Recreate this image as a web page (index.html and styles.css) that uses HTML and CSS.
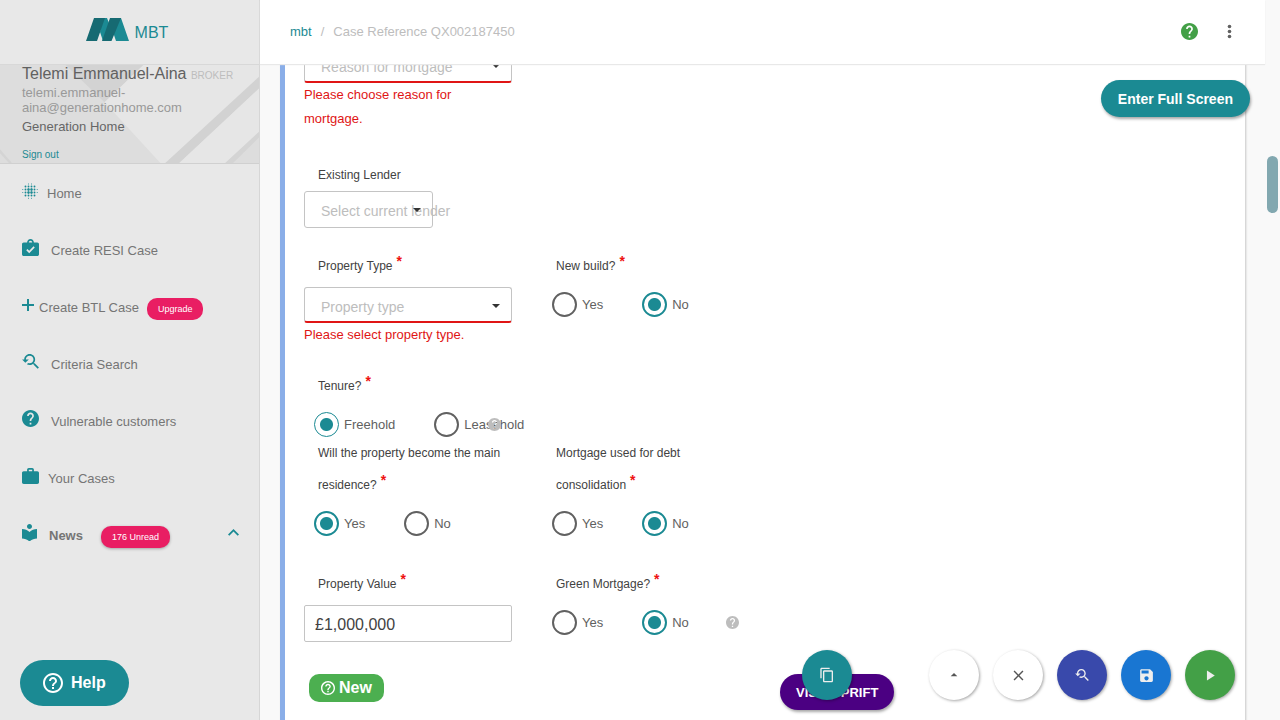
FILE: index.html
```html
<!DOCTYPE html>
<html lang="en">
<head>
<meta charset="utf-8">
<title>Case Reference QX002187450</title>
<link rel="stylesheet" href="styles.css">
</head>
<body>
<svg class="sprite" aria-hidden="true">
  <symbol id="help-solid" viewBox="2 2 20 20"><path d="M12 2C6.480 2 2 6.480 2 12s4.480 10 10 10 10-4.480 10-10S17.520 2 12 2zm1 17h-2v-2h2v2zm2.070-7.750l-.9.920C13.450 12.900 13 13.500 13 15h-2v-.5c0-1.100.450-2.100 1.170-2.830l1.240-1.260c.370-.360.590-.860.590-1.410 0-1.100-.9-2-2-2s-2 .9-2 2H8c0-2.210 1.790-4 4-4s4 1.790 4 4c0 .880-.360 1.680-.930 2.250z"/></symbol>
  <symbol id="help-line" viewBox="2 2 20 20"><path d="M11 18h2v-2h-2v2zm1-16C6.480 2 2 6.480 2 12s4.480 10 10 10 10-4.480 10-10S17.520 2 12 2zm0 18c-4.410 0-8-3.590-8-8s3.590-8 8-8 8 3.590 8 8-3.590 8-8 8zm0-14c-2.210 0-4 1.790-4 4h2c0-1.100.9-2 2-2s2 .9 2 2c0 2-3 1.750-3 5h2c0-2.250 3-2.500 3-5 0-2.210-1.790-4-4-4z"/></symbol>
  <symbol id="search-back" viewBox="2 3 20 19"><path d="M17.010 14h-.8l-.270-.270c.980-1.140 1.570-2.610 1.570-4.230 0-3.590-2.910-6.500-6.500-6.500s-6.500 3-6.500 6.500H2l3.840 4 4.160-4H6.510C6.510 7 8.530 5 11.010 5s4.500 2.010 4.500 4.500c0 2.480-2.020 4.500-4.500 4.500-.650 0-1.260-.140-1.820-.380L7.710 15.100c.970.570 2.090.9 3.300.9 1.610 0 3.080-.590 4.220-1.570l.270.270v.790l5.010 4.990L22 19l-4.990-5z"/></symbol>
</svg>

<div class="shell">
  <aside class="sidebar">
    <div class="brand">
      <svg class="brand-mark" viewBox="0 0 43 23" aria-hidden="true">
        <path fill="#1b8a93" d="M16 0h5l2 5-2 14-4 4-3-9zM31 0h4l8 23H30l-3-9z"/>
        <path fill="#166a72" d="M8 0h11L11 23H0zM24 0h11l-9.500 23H16z"/>
      </svg>
      <span>MBT</span>
    </div>
    <section class="user">
      <svg class="user-art" viewBox="0 0 260 100" preserveAspectRatio="none" aria-hidden="true">
        <path fill="#dddddd" d="M0 0h260v100H0z"/>
        <path fill="#d3d3d3" d="M66 0h78l-39 38z"/>
        <path fill="#e6e6e6" d="M144 0h116v14l-94 86h-5l-56-62z"/>
        <path fill="#d2d2d2" d="M260 12v12l-80 76h-14z"/>
        <path fill="#e6e6e6" d="M260 24v46l-33 30h-47z"/>
        <path fill="#d4d4d4" d="M260 68v6l-26 26h-8zM0 86l12 14H9L0 90z"/>
      </svg>
      <div class="user-name">Telemi Emmanuel-Aina <small>BROKER</small></div>
      <div class="user-mail">telemi.emmanuel-<br>aina@generationhome.com</div>
      <div class="user-firm">Generation Home</div>
      <a class="sign-out" href="#">Sign out</a>
    </section>
    <nav class="nav">
      <a class="nav-item gap-m" href="#">
        <svg width="16" height="16" viewBox="0 0 16 16" aria-hidden="true"><g fill="none" stroke="#1b8a93" stroke-linecap="round"><path stroke-width="2.400" stroke-dasharray="0 3" d="M6.500 6.500h4M6.500 9.500h4"/><path stroke-width="1.900" stroke-dasharray="0 3" d="M3.500 3.500h10M3.500 12.500h10M3.500 6.500h10M3.500 9.500h10"/><path stroke-width="1" stroke-dasharray="0 3" d="M6.500 1h4M6.500 15.300h4M.8 6.500v4M15.200 6.500v4"/></g></svg>
        <span>Home</span></a>
      <a class="nav-item gap-l" href="#">
        <svg width="17" height="17" viewBox="2 2 20 19" preserveAspectRatio="none" aria-hidden="true"><path fill-rule="evenodd" d="M20 6h-4c0-2.210-1.790-4-4-4S8 3.790 8 6H4c-1.100 0-2 .9-2 2v11c0 1.100.9 2 2 2h16c1.100 0 2-.9 2-2V8c0-1.100-.9-2-2-2zm-8-2c1.100 0 2 .9 2 2h-4c0-1.100.9-2 2-2zm-1.500 14L7 14.500l1.410-1.410 2.090 2.080 5.090-5.090L17 11.500 10.500 18z"/></svg>
        <span>Create RESI Case</span></a>
      <a class="nav-item gap-s" href="#">
        <svg width="12" height="12" viewBox="0 0 12 12" aria-hidden="true"><path d="M5 0h2v5h5v2H7v5H5V7H0V5h5z"/></svg>
        <span>Create BTL Case</span><span class="pill">Upgrade</span></a>
      <a class="nav-item gap-l" href="#">
        <svg width="17" height="16" aria-hidden="true"><use href="#search-back"/></svg>
        <span>Criteria Search</span></a>
      <a class="nav-item gap-l" href="#">
        <svg width="17" height="17" aria-hidden="true"><use href="#help-solid"/></svg>
        <span>Vulnerable customers</span></a>
      <a class="nav-item gap-m" href="#">
        <svg width="17" height="16" viewBox="2 2 20 19" preserveAspectRatio="none" aria-hidden="true"><path fill-rule="evenodd" d="M20 6h-4V4c0-1.100-.9-2-2-2h-4c-1.100 0-2 .9-2 2v2H4c-1.100 0-2 .9-2 2v11c0 1.100.9 2 2 2h16c1.100 0 2-.9 2-2V8c0-1.100-.9-2-2-2zm-6 0h-4V4h4v2z"/></svg>
        <span>Your Cases</span></a>
      <a class="nav-item gap-l news" href="#">
        <svg width="15" height="17" viewBox="3 2 18 20" preserveAspectRatio="none" aria-hidden="true"><path d="M12 11.550C9.640 9.350 6.480 8 3 8v11c3.480 0 6.640 1.350 9 3.550 2.360-2.190 5.520-3.550 9-3.550V8c-3.480 0-6.640 1.350-9 3.550zM12 8c1.660 0 3-1.340 3-3s-1.340-3-3-3-3 1.340-3 3 1.340 3 3 3z"/></svg>
        <span>News</span><span class="pill raised">176 Unread</span>
        <svg class="chevron" width="11" height="7" viewBox="0 0 11 7" aria-hidden="true"><path d="M5.500 0L11 5.500 9.700 6.800 5.500 2.600 1.300 6.800 0 5.500z"/></svg></a>
    </nav>
    <button class="help" type="button"><svg width="20" height="20" aria-hidden="true"><use href="#help-line"/></svg>Help</button>
  </aside>

  <main class="main">
    <header class="topbar">
      <nav class="crumbs"><a href="#">mbt</a><span>/</span><span>Case Reference QX002187450</span></nav>
      <button class="icon-btn green" type="button" aria-label="Help"><svg width="17" height="17"><use href="#help-solid"/></svg></button>
      <button class="icon-btn" type="button" aria-label="More"><svg width="17" height="17" viewBox="0 0 17 17"><circle cx="8.500" cy="3.500" r="1.800"/><circle cx="8.500" cy="8.500" r="1.800"/><circle cx="8.500" cy="13.500" r="1.800"/></svg></button>
    </header>

    <div class="viewport">
      <form class="panel">
        <div class="row">
          <div class="field">
            <div class="select invalid"><select aria-label="Reason for mortgage"><option>Reason for mortgage</option></select></div>
            <p class="error">Please choose reason for mortgage.</p>
          </div>
        </div>

        <div class="row after-error">
          <div class="field">
            <label class="label" for="lender">Existing Lender</label>
            <div class="select narrow"><select id="lender"><option>Select current lender</option></select></div>
          </div>
        </div>

        <div class="row close">
          <div class="field">
            <label class="label req" for="ptype">Property Type<b>*</b></label>
            <div class="select invalid"><select id="ptype"><option>Property type</option></select></div>
            <p class="error">Please select property type.</p>
          </div>
          <div class="field" role="group" aria-labelledby="l-build">
            <div class="label req" id="l-build">New build?<b>*</b></div>
            <div class="radios"><label><input type="radio" name="build">Yes</label><label><input type="radio" name="build" checked>No</label></div>
          </div>
        </div>

        <div class="row close">
          <div class="field" role="group" aria-labelledby="l-tenure">
            <div class="label req" id="l-tenure">Tenure?<b>*</b></div>
            <div class="radios"><label><input class="thin" type="radio" name="tenure" checked>Freehold</label><label><input type="radio" name="tenure">Leasehold</label>
              <svg class="hint" aria-hidden="true"><use href="#help-solid"/></svg></div>
          </div>
        </div>

        <div class="row">
          <div class="field" role="group" aria-labelledby="l-main">
            <div class="label req" id="l-main">Will the property become the main residence?<b>*</b></div>
            <div class="radios"><label><input type="radio" name="residence" checked>Yes</label><label><input type="radio" name="residence">No</label></div>
          </div>
          <div class="field" role="group" aria-labelledby="l-debt">
            <div class="label req" id="l-debt">Mortgage used for debt consolidation<b>*</b></div>
            <div class="radios"><label><input type="radio" name="debt">Yes</label><label><input type="radio" name="debt" checked>No</label></div>
          </div>
        </div>

        <div class="row far">
          <div class="field">
            <label class="label req" for="value">Property Value<b>*</b></label>
            <input class="text" id="value" type="text" value="£1,000,000">
          </div>
          <div class="field" role="group" aria-labelledby="l-green">
            <div class="label req" id="l-green">Green Mortgage?<b>*</b></div>
            <div class="radios"><label><input type="radio" name="green">Yes</label><label><input type="radio" name="green" checked>No</label>
              <svg class="hint" aria-hidden="true"><use href="#help-solid"/></svg></div>
          </div>
        </div>

        <div class="row far">
          <button class="new" type="button"><svg width="14" height="14" aria-hidden="true"><use href="#help-line"/></svg>New</button>
          <button class="sprift" type="button">VISIT SPRIFT</button>
        </div>
      </form>
    </div>

    <button class="fullscreen" type="button">Enter Full Screen</button>
    <div class="fabs">
      <button class="fab teal" type="button" aria-label="Copy"><svg width="16" height="16" viewBox="0 0 24 24"><path d="M16 1H4c-1.100 0-2 .9-2 2v14h2V3h12V1zm3 4H8c-1.100 0-2 .9-2 2v14c0 1.100.9 2 2 2h11c1.100 0 2-.9 2-2V7c0-1.100-.9-2-2-2zm0 16H8V7h11v14z"/></svg></button>
      <button class="fab white" type="button" aria-label="Up"><svg width="16" height="16" viewBox="0 0 24 24"><path d="M7 14l5-5 5 5z"/></svg></button>
      <button class="fab white" type="button" aria-label="Close"><svg width="17" height="17" viewBox="0 0 24 24"><path d="M19 6.410L17.590 5 12 10.590 6.410 5 5 6.410 10.590 12 5 17.590 6.410 19 12 13.410 17.590 19 19 17.590 13.410 12z"/></svg></button>
      <button class="fab indigo" type="button" aria-label="Search again"><svg width="14" height="13"><use href="#search-back"/></svg></button>
      <button class="fab blue" type="button" aria-label="Save"><svg width="17" height="17" viewBox="0 0 24 24"><path d="M17 3H5c-1.110 0-2 .9-2 2v14c0 1.100.890 2 2 2h14c1.100 0 2-.9 2-2V7l-4-4zm-5 16c-1.660 0-3-1.340-3-3s1.340-3 3-3 3 1.340 3 3-1.340 3-3 3zm3-10H5V5h10v4z"/></svg></button>
      <button class="fab green" type="button" aria-label="Run"><svg width="17" height="17" viewBox="0 0 24 24"><path d="M7 5v14l11-7z"/></svg></button>
    </div>
  </main>

  <div class="track" aria-hidden="true"><div class="thumb"></div></div>
</div>
</body>
</html>
```

FILE: styles.css
```css
* { box-sizing: border-box; }

body {
  margin: 0;
  background: #f9f9f9;
  color: #424242;
  font: 13px/15px "Liberation Sans", Arial, sans-serif;
}

a { color: #1b8a93; text-decoration: none; }
button, input, select { font-family: inherit; margin: 0; }
button { border: 0; padding: 0; cursor: pointer; }
p { margin: 0; }
svg { display: block; fill: currentColor; flex: none; }
.sprite { position: absolute; width: 0; height: 0; }

.shell {
  display: grid;
  grid-template-columns: 260px minmax(0, 1fr) 15px;
  height: 100vh;
  overflow: hidden;
}

/* Sidebar */
.sidebar {
  display: flex;
  flex-direction: column;
  min-height: 0;
  background: #e8e8e8;
  border-right: 1px solid #d6d6d6;
}
.brand {
  display: flex;
  align-items: center;
  justify-content: center;
  gap: 6px;
  height: 64px;
  padding-right: 5px;
  color: #1b8a93;
  font-size: 16px;
}
.brand-mark { width: 43px; height: 23px; margin-bottom: 5px; }
.user {
  position: relative;
  display: flex;
  flex-direction: column;
  height: 100px;
  padding-left: 22px;
  border-top: 1px solid #d8d8d8;
  border-bottom: 1px solid #d0d0d0;
}
.user-art { position: absolute; inset: 0; width: 100%; height: 100%; z-index: 0; }
.user > :not(.user-art) { position: relative; }
.user-name { color: #616161; font-size: 16px; line-height: 18px; white-space: nowrap; }
.user-name small { color: #bdbdbd; font-size: 10px; }
.user-mail { color: #999; }
.user-firm { margin-top: 4px; color: #666; }
.sign-out { margin-top: 13px; font-size: 10px; }

.nav { display: flex; flex-direction: column; }
.nav-item {
  display: flex;
  align-items: center;
  height: 57px;
  padding: 2px 20px 0 22px;
  color: #757575;
}
.nav-item svg { margin-bottom: 6px; color: #1b8a93; }
.gap-s > svg:first-child { margin-right: 5px; }
.gap-m > svg:first-child { margin-right: 9px; }
.gap-l > svg:first-child { margin-right: 12px; }
.pill {
  height: 22px;
  margin: 2px 0 0 8px;
  padding: 0 11px;
  border-radius: 10px;
  background: #e91e63;
  color: #fff;
  font-size: 9px;
  line-height: 22px;
}
.news > span:nth-child(2) { font-weight: bold; }
.news .pill { margin-left: 18px; }
.raised { box-shadow: 0 1px 3px rgba(0, 0, 0, .3); }
.chevron { margin-left: auto; }

.help {
  display: flex;
  align-items: center;
  align-self: flex-start;
  gap: 8px;
  height: 46px;
  margin: auto 0 14px 20px;
  padding: 0 23px;
  border-radius: 23px;
  background: #1b8a93;
  color: #fff;
  font-size: 16px;
  font-weight: bold;
}

/* Main column */
.main {
  position: relative;
  display: flex;
  flex-direction: column;
  min-width: 0;
  min-height: 0;
}
.topbar {
  position: relative;
  z-index: 1;
  display: flex;
  align-items: center;
  gap: 23px;
  flex: none;
  height: 64px;
  padding: 0 27px 2px 30px;
  background: #fff;
  box-shadow: 0 1px 1px #e8e8e8;
}
.crumbs { display: flex; gap: 9px; margin-right: auto; color: #bdbdbd; }
.icon-btn { display: grid; place-items: center; width: 17px; height: 17px; background: none; color: #616161; }
.icon-btn.green { color: #43a047; }

.viewport { flex: 1; min-height: 0; overflow: hidden; padding: 0 20px; }
.panel {
  min-height: 100%;
  margin-top: -17px;
  padding: 0 19px 40px;
  border-left: 5px solid #8aaee8;
  background: #fff;
  box-shadow: 1px 0 2px rgba(0, 0, 0, .2);
}
.row { display: grid; grid-template-columns: repeat(4, minmax(0, 1fr)); gap: 30px; align-items: start; }
.row.close { margin-top: 22px; }
.row.after-error { margin-top: 27px; }
.row.far { margin-top: 32px; }

.label { display: block; padding-left: 14px; font-size: 12px; line-height: 32px; }
.label.req { margin-bottom: 5px; }
.label b {
  margin-left: 4px;
  color: #e11;
  font-size: 14px;
  line-height: 1px;
  vertical-align: 4px;
}
.error { color: #e01515; line-height: 24px; padding: 0 20px 1px 0; }

.select {
  position: relative;
  height: 37px;
  border: 1px solid #c4c4c4;
  border-radius: 3px;
}
.select::after {
  content: "";
  position: absolute;
  top: 16px;
  right: 11px;
  border: 4px solid transparent;
  border-top-color: #333;
  border-bottom: 0;
  pointer-events: none;
}
.select select {
  appearance: none;
  display: block;
  width: 100%;
  height: 34px;
  padding: 4px 0 0 16px;
  border: 0;
  background: transparent;
  color: #bdbdbd;
  font-size: 14px;
}
.select.invalid { height: 36px; border-bottom: 2px solid #e01515; }
.select.narrow { width: 129px; }
.select.narrow select { width: 160px; }

.text {
  display: block;
  width: 100%;
  height: 37px;
  padding: 2px 10px 0;
  border: 1px solid #c4c4c4;
  border-radius: 2px;
  color: #424242;
  font-size: 16px;
}

.radios {
  position: relative;
  display: flex;
  gap: 39px;
  height: 26px;
  margin-top: 9px;
  padding-left: 10px;
  color: #616161;
}
.radios label { display: flex; align-items: center; gap: 5px; }
.radios input {
  appearance: none;
  flex: none;
  width: 25px;
  height: 25px;
  margin: 0;
  border: 2px solid #616161;
  border-radius: 50%;
}
.radios input:checked {
  border-color: #1b8a93;
  background: radial-gradient(circle, #1b8a93 6px, transparent 7px);
}
.radios input.thin { border-width: 1px; }
.hint { position: absolute; right: 11px; top: 7px; width: 13px; height: 13px; color: #bdbdbd; }

.new {
  display: flex;
  align-items: center;
  justify-self: start;
  gap: 4px;
  height: 28px;
  margin-left: 5px;
  padding: 0 12px;
  border-radius: 10px;
  background: #4caf50;
  color: #fff;
  font-size: 16px;
  font-weight: bold;
}
.sprift {
  grid-column: 3;
  justify-self: start;
  height: 36px;
  padding: 0 16px;
  border-radius: 18px;
  background: #4b0082;
  color: #fff;
  font-size: 13px;
  font-weight: bold;
  box-shadow: 1px 2px 3px rgba(0, 0, 0, .35);
}

/* Floating controls over the form */
.fullscreen {
  position: absolute;
  top: 80px;
  right: 15px;
  height: 37px;
  padding: 0 17px;
  border-radius: 19px;
  background: #1b8a93;
  color: #fff;
  font-size: 14px;
  font-weight: bold;
  box-shadow: 1px 2px 3px rgba(0, 0, 0, .35);
}
.fabs { position: absolute; right: 30px; bottom: 20px; display: flex; gap: 14px; }
.fab {
  display: grid;
  place-items: center;
  width: 50px;
  height: 50px;
  border-radius: 50%;
  color: #eee;
  box-shadow: 1px 1px 3px rgba(0, 0, 0, .35);
}
.fab.teal { margin-right: 63px; background: #1b8a93; }
.fab.white { background: #fff; color: #555; }
.fab.indigo { background: #3949ab; }
.fab.blue { background: #1976d2; }
.fab.green { background: #43a047; }

.track { display: flex; justify-content: center; padding: 156px 0 0; }
.thumb { width: 11px; height: 57px; border-radius: 6px; background: #82a8b0; }
```
